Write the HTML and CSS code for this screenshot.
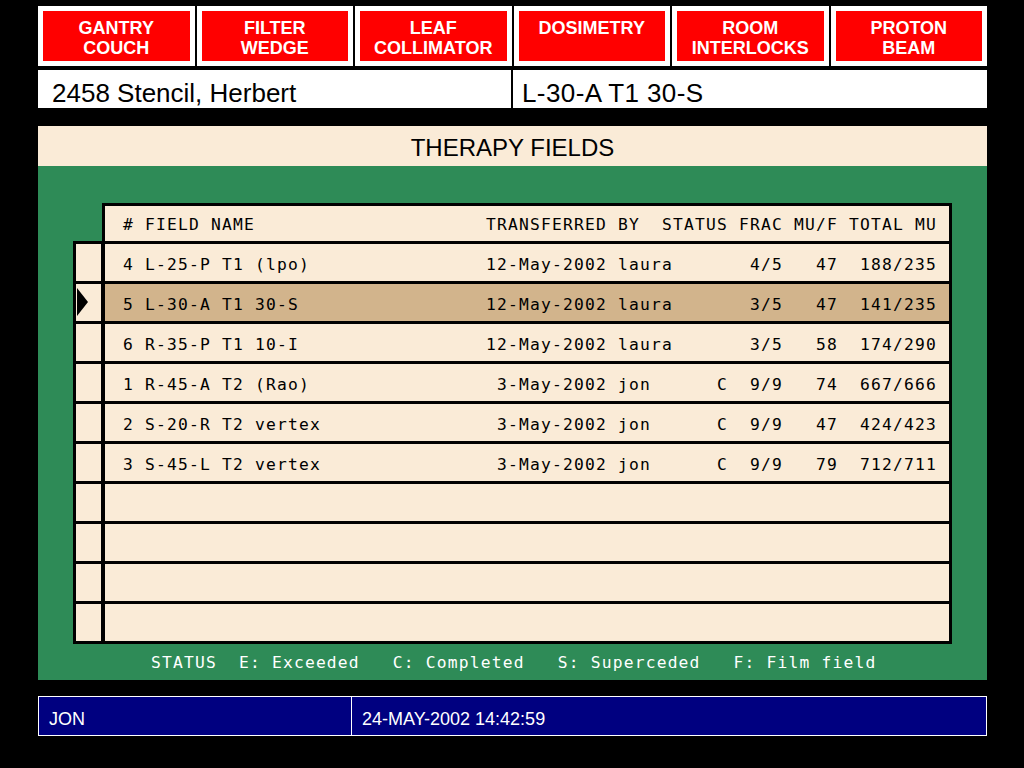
FILE: index.html
```html
<!DOCTYPE html>
<html lang="en">
<head>
<meta charset="utf-8">
<title>Therapy Fields</title>
<link rel="stylesheet" href="styles.css">
</head>
<body>
<div class="screen">
  <nav class="tabs">
    <div class="tab"><div class="tab-face">GANTRY<br>COUCH</div></div>
    <div class="tab"><div class="tab-face">FILTER<br>WEDGE</div></div>
    <div class="tab"><div class="tab-face">LEAF<br>COLLIMATOR</div></div>
    <div class="tab"><div class="tab-face">DOSIMETRY</div></div>
    <div class="tab"><div class="tab-face">ROOM<br>INTERLOCKS</div></div>
    <div class="tab"><div class="tab-face">PROTON<br>BEAM</div></div>
  </nav>

  <div class="patient">
    <div class="patient-name">2458 Stencil, Herbert</div>
    <div class="patient-field">L-30-A T1 30-S</div>
  </div>

  <section class="panel">
    <h1 class="panel-title">THERAPY FIELDS</h1>
    <div class="panel-body">
      <div class="fields">
        <div class="fields-head">
          <div class="cells">
            <span class="c-num">#</span><span class="c-name">FIELD NAME</span><span class="c-date">TRANSFERRED</span><span class="c-by">BY</span><span class="c-status">STATUS</span><span class="c-frac">FRAC</span><span class="c-muf">MU/F</span><span class="c-total">TOTAL MU</span>
          </div>
        </div>
        <div class="fields-body">
          <div class="marker"></div>
          <div class="cells">
            <span class="c-num">4</span><span class="c-name">L-25-P T1 (lpo)</span><span class="c-date">12-May-2002</span><span class="c-by">laura</span><span class="c-status"></span><span class="c-frac">4/5</span><span class="c-muf">47</span><span class="c-total">188/235</span>
          </div>

          <div class="marker"><svg class="pointer" width="11" height="28" viewBox="0 0 11 28"><polygon points="0,0 11,14 0,28" fill="#000"/></svg></div>
          <div class="cells selected">
            <span class="c-num">5</span><span class="c-name">L-30-A T1 30-S</span><span class="c-date">12-May-2002</span><span class="c-by">laura</span><span class="c-status"></span><span class="c-frac">3/5</span><span class="c-muf">47</span><span class="c-total">141/235</span>
          </div>

          <div class="marker"></div>
          <div class="cells">
            <span class="c-num">6</span><span class="c-name">R-35-P T1 10-I</span><span class="c-date">12-May-2002</span><span class="c-by">laura</span><span class="c-status"></span><span class="c-frac">3/5</span><span class="c-muf">58</span><span class="c-total">174/290</span>
          </div>

          <div class="marker"></div>
          <div class="cells">
            <span class="c-num">1</span><span class="c-name">R-45-A T2 (Rao)</span><span class="c-date">3-May-2002</span><span class="c-by">jon</span><span class="c-status">C</span><span class="c-frac">9/9</span><span class="c-muf">74</span><span class="c-total">667/666</span>
          </div>

          <div class="marker"></div>
          <div class="cells">
            <span class="c-num">2</span><span class="c-name">S-20-R T2 vertex</span><span class="c-date">3-May-2002</span><span class="c-by">jon</span><span class="c-status">C</span><span class="c-frac">9/9</span><span class="c-muf">47</span><span class="c-total">424/423</span>
          </div>

          <div class="marker"></div>
          <div class="cells">
            <span class="c-num">3</span><span class="c-name">S-45-L T2 vertex</span><span class="c-date">3-May-2002</span><span class="c-by">jon</span><span class="c-status">C</span><span class="c-frac">9/9</span><span class="c-muf">79</span><span class="c-total">712/711</span>
          </div>

          <div class="marker"></div><div class="cells"></div>
          <div class="marker"></div><div class="cells"></div>
          <div class="marker"></div><div class="cells"></div>
          <div class="marker"></div><div class="cells"></div>
        </div>
      </div>
      <div class="legend">STATUS  E: Exceeded   C: Completed   S: Superceded   F: Film field</div>
    </div>
  </section>

  <footer class="status-bar">
    <div class="status-user">JON</div>
    <div class="status-time">24-MAY-2002 14:42:59</div>
  </footer>
</div>
</body>
</html>
```

FILE: styles.css
```css
html, body {
  margin: 0;
  padding: 0;
  background: #000;
}

body {
  width: 1024px;
  height: 768px;
  overflow: hidden;
  font-family: "Liberation Sans", Arial, sans-serif;
}

.screen {
  width: 949px;
  margin-left: 38px;
  padding-top: 6px;
}

/* ---------- top tabs ---------- */
.tabs {
  display: flex;
  gap: 2px;
  height: 60px;
}

.tab {
  flex: 1;
  background: #fff;
  padding: 5px;
  box-sizing: border-box;
}

.tab-face {
  height: 100%;
  background: #ff0000;
  color: #fff;
  font-weight: bold;
  font-size: 18px;
  line-height: 20px;
  text-align: center;
  padding-top: 7px;
  box-sizing: border-box;
}

/* ---------- patient bar ---------- */
.patient {
  display: flex;
  gap: 2px;
  margin-top: 4px;
  height: 38px;
}

.patient-name,
.patient-field {
  background: #fff;
  color: #000;
  font-size: 26px;
  line-height: 31px;
  padding-top: 8px;
  box-sizing: border-box;
  white-space: nowrap;
}

.patient-name {
  width: 473px;
  padding-left: 14px;
}

.patient-field {
  flex: 1;
  padding-left: 9px;
  letter-spacing: 0.4px;
}

/* ---------- therapy panel ---------- */
.panel {
  margin-top: 18px;
}

.panel-title {
  margin: 0;
  height: 40px;
  box-sizing: border-box;
  padding-top: 4px;
  background: #faebd7;
  color: #000;
  font-weight: normal;
  font-size: 24px;
  line-height: 36px;
  text-align: center;
}

.panel-body {
  background: #2e8b57;
  padding: 37px 0 0 35px;
}

.fields {
  width: 879px;
  font-family: "DejaVu Sans Mono", "Liberation Mono", monospace;
  font-size: 16.3px;
  letter-spacing: 1.19px;
  color: #000;
}

.fields-head {
  margin-left: 29px;
  height: 38px;
  box-sizing: border-box;
  border: 3px solid #000;
  border-bottom: 0;
  background: #faebd7;
}

.fields-head .cells {
  height: 35px;
  box-sizing: border-box;
  padding-top: 2px;
  line-height: 33px;
}

.fields-body {
  display: grid;
  grid-template-columns: 25px 844px;
  grid-auto-rows: 37px;
  column-gap: 4px;
  row-gap: 3px;
  padding: 3px;
  background: #000;
}

.marker {
  background: #faebd7;
  display: flex;
  align-items: center;
}

.pointer {
  display: block;
  margin-left: 1px;
  margin-top: -2px;
}

.cells {
  display: flex;
  box-sizing: border-box;
  background: #faebd7;
  padding-left: 18px;
  padding-top: 4px;
  line-height: 33px;
  white-space: pre;
}

.cells.selected {
  background: #d2b48c;
}

.cells span {
  flex: none;
  display: block;
  overflow: visible;
}

.c-num { width: 22px; }
.c-name { width: 341px; }
.c-date { width: 121px; text-align: right; margin-right: 11px; }
.c-by { width: 44px; }
.c-status { width: 66px; text-align: right; }
.c-frac { width: 55px; text-align: right; }
.c-muf { width: 55px; text-align: right; }
.c-total { width: 99px; text-align: right; }

.legend {
  height: 36px;
  box-sizing: border-box;
  padding-top: 1px;
  line-height: 35px;
  padding-left: 78px;
  color: #fff;
  font-family: "DejaVu Sans Mono", "Liberation Mono", monospace;
  font-size: 16.3px;
  letter-spacing: 1.19px;
  white-space: pre;
}

/* ---------- bottom status bar ---------- */
.status-bar {
  display: flex;
  margin-top: 16px;
  height: 40px;
  box-sizing: border-box;
  border: 1px solid #fff;
  background: #000080;
  color: #fff;
  font-size: 18px;
}

.status-user,
.status-time {
  box-sizing: border-box;
  padding: 6px 0 0 10px;
  line-height: 32px;
  white-space: nowrap;
}

.status-user {
  width: 313px;
  border-right: 1px solid #fff;
}

.status-time {
  flex: 1;
}
```
